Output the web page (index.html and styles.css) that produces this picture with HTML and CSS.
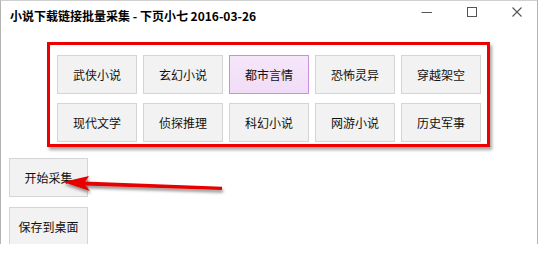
FILE: index.html
```html
<!DOCTYPE html>
<html lang="zh-CN">
<head>
<meta charset="utf-8">
<title>小说下载链接批量采集</title>
<link rel="stylesheet" href="styles.css">
</head>
<body>
<div class="window">
  <div class="titlebar">
    <span class="title">小说下载链接批量采集 - 下页小七 2016-03-26</span>
    <div class="caption">
      <span class="cap-btn"><svg width="12" height="12" viewBox="0 0 12 12"><line x1="0.5" y1="6.5" x2="11" y2="6.5" stroke="#555" stroke-width="1"/></svg></span>
      <span class="cap-btn"><svg width="12" height="12" viewBox="0 0 12 12"><rect x="1.5" y="1.5" width="9" height="9" fill="none" stroke="#555" stroke-width="1"/></svg></span>
      <span class="cap-btn"><svg width="12" height="12" viewBox="0 0 12 12"><path d="M1.5 1.5 L10.5 10.5 M10.5 1.5 L1.5 10.5" stroke="#555" stroke-width="1.1"/></svg></span>
    </div>
  </div>
  <div class="content">
    <div class="frame">
      <div class="grid">
        <button class="btn">武侠小说</button>
        <button class="btn">玄幻小说</button>
        <button class="btn btn-active">都市言情</button>
        <button class="btn">恐怖灵异</button>
        <button class="btn">穿越架空</button>
        <button class="btn">现代文学</button>
        <button class="btn">侦探推理</button>
        <button class="btn">科幻小说</button>
        <button class="btn">网游小说</button>
        <button class="btn">历史军事</button>
      </div>
    </div>
    <div class="actions">
      <button class="btn btn-side">开始采集</button>
      <button class="btn btn-side">保存到桌面</button>
    </div>
  </div>
</div>
<svg class="arrow" width="538" height="254" viewBox="0 0 538 254">
  <defs>
    <filter id="sh" x="-10%" y="-50%" width="130%" height="250%">
      <feDropShadow dx="1" dy="2.5" stdDeviation="1.5" flood-color="#000" flood-opacity="0.45"/>
    </filter>
  </defs>
  <g filter="url(#sh)" fill="#e60000">
    <polygon points="84,181.5 222,186.8 222,190 84,185.5"/>
    <polygon points="63,182 89,176 84,183.5 90,191"/>
  </g>
</svg>
</body>
</html>
```
FILE: styles.css
```css
* {
  box-sizing: border-box;
}

html, body {
  margin: 0;
  padding: 0;
  background: #ffffff;
}

body {
  position: relative;
  width: 538px;
  height: 254px;
  overflow: hidden;
  font-family: "Noto Sans CJK SC", "Noto Sans", sans-serif;
  font-size: 12px;
  color: #000;
}

.window {
  width: 538px;
  height: 244px;
  border: 1px solid #b4b4b4;
  border-top-color: #d0d0d0;
  border-bottom: none;
  background: #fff;
  overflow: hidden;
}

.titlebar {
  display: flex;
  align-items: center;
  justify-content: space-between;
  height: 29px;
  padding-left: 9px;
}

.title {
  font-weight: bold;
  font-size: 12px;
  color: #000;
  line-height: 29px;
}

.caption {
  display: flex;
  height: 29px;
  margin-right: -2px;
}

.cap-btn {
  width: 45px;
  height: 29px;
  display: flex;
  align-items: flex-start;
  justify-content: center;
  padding-top: 5px;
}

.content {
  padding: 12px 0 0 8px;
}

.frame {
  width: 443px;
  margin-left: 38px;
  border: 3px solid #ee0000;
  padding: 10px 6px 2px 7px;
  box-shadow: 2px 3px 3px rgba(0, 0, 0, 0.35);
}

.grid {
  display: grid;
  grid-template-columns: repeat(5, 80px);
  grid-auto-rows: 39px;
  gap: 9px 6px;
}

.btn {
  font-family: "Noto Sans CJK SC", "Noto Sans", sans-serif;
  font-size: 12px;
  color: #111;
  background: #f2f2f2;
  border: 1px solid #d4d4d4;
  margin: 0;
  padding: 0;
  display: flex;
  align-items: center;
  justify-content: center;
  height: 39px;
}

.btn-active {
  background: linear-gradient(#f6e6fa, #f1dcf7);
  border-color: #c991d6;
}

.actions {
  display: flex;
  flex-direction: column;
  gap: 10px;
  margin-top: 11px;
}

.btn-side {
  width: 79px;
}

.arrow {
  position: absolute;
  left: 0;
  top: 0;
  pointer-events: none;
}
```
